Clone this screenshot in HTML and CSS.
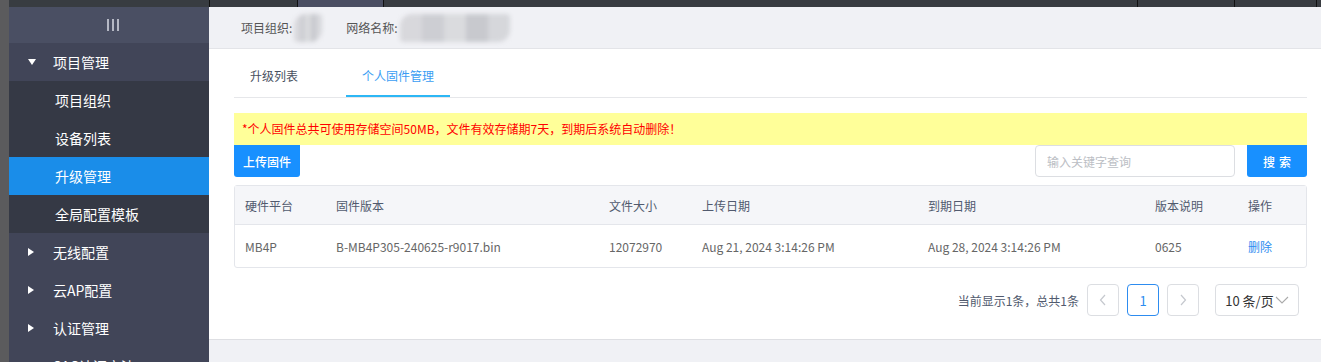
FILE: index.html
```html
<!DOCTYPE html>
<html>

<head>
    <title>个人固件管理</title>
    <meta charset="UTF-8">
    <link rel="stylesheet" href="styles.css">
</head>

<body>
    <div class="app">
        <div class="edge"></div>
        <div class="frame">
            <div class="topbar">
                <span class="seg" style="width:200px"></span>
                <span class="seg" style="width:87px"></span>
                <span class="seg seg-on" style="width:85px"></span>
                <span class="seg" style="width:753px"></span>
                <span class="seg" style="width:96px"></span>
                <span class="seg" style="width:81px"></span>
                <span class="seg"></span>
            </div>
            <div class="workspace">
                <aside class="sidebar">
                    <div class="side-head">
                        <span class="bars"><i></i><i></i><i></i></span>
                    </div>
                    <div class="menu-item open"><span class="caret down"></span>项目管理</div>
                    <div class="sub-item">项目组织</div>
                    <div class="sub-item">设备列表</div>
                    <div class="sub-item active">升级管理</div>
                    <div class="sub-item">全局配置模板</div>
                    <div class="menu-item"><span class="caret"></span>无线配置</div>
                    <div class="menu-item"><span class="caret"></span>云AP配置</div>
                    <div class="menu-item"><span class="caret"></span>认证管理</div>
                    <div class="menu-item"><span class="caret"></span>SAC认证方法</div>
                </aside>
                <main class="content">
                    <div class="crumbs">
                        <span class="crumb">项目组织:</span>
                        <span class="blur small"></span>
                        <span class="crumb">网络名称:</span>
                        <span class="blur wide"></span>
                    </div>
                    <section class="panel">
                        <nav class="tabs">
                            <a class="tab">升级列表</a>
                            <a class="tab current">个人固件管理</a>
                        </nav>
                        <div class="notice">*个人固件总共可使用存储空间50MB，文件有效存储期7天，到期后系统自动删除！</div>
                        <div class="toolbar">
                            <button class="btn">上传固件</button>
                            <div class="search">
                                <input class="search-input" type="text" placeholder="输入关键字查询">
                                <button class="btn btn-search">搜索</button>
                            </div>
                        </div>
                        <table class="grid">
                            <colgroup>
                                <col style="width:91px">
                                <col style="width:273px">
                                <col style="width:93px">
                                <col style="width:226px">
                                <col style="width:227px">
                                <col style="width:93px">
                                <col>
                            </colgroup>
                            <thead>
                                <tr>
                                    <th>硬件平台</th>
                                    <th>固件版本</th>
                                    <th>文件大小</th>
                                    <th>上传日期</th>
                                    <th>到期日期</th>
                                    <th>版本说明</th>
                                    <th>操作</th>
                                </tr>
                            </thead>
                            <tbody>
                                <tr>
                                    <td>MB4P</td>
                                    <td>B-MB4P305-240625-r9017.bin</td>
                                    <td>12072970</td>
                                    <td>Aug 21, 2024 3:14:26 PM</td>
                                    <td>Aug 28, 2024 3:14:26 PM</td>
                                    <td>0625</td>
                                    <td><a class="link">删除</a></td>
                                </tr>
                            </tbody>
                        </table>
                        <div class="pager">
                            <span class="total">当前显示1条，总共1条</span>
                            <span class="page-btn">
                                <svg width="8" height="12" viewBox="0 0 8 12"><path d="M6 1L1.5 6L6 11" fill="none" stroke="#c5c8ce" stroke-width="1.2"/></svg>
                            </span>
                            <span class="page-btn page-on">1</span>
                            <span class="page-btn">
                                <svg width="8" height="12" viewBox="0 0 8 12"><path d="M2 1L6.5 6L2 11" fill="none" stroke="#c5c8ce" stroke-width="1.2"/></svg>
                            </span>
                            <span class="page-size">10 条/页
                                <svg width="14" height="8" viewBox="0 0 14 8"><path d="M1 1L7 7L13 1" fill="none" stroke="#aaa" stroke-width="1.1"/></svg>
                            </span>
                        </div>
                    </section>
                </main>
            </div>
        </div>
    </div>
</body>

</html>
```

FILE: styles.css
```css
html, body {
    margin: 0;
    height: 100%;
    overflow: hidden;
    font-family: "Noto Sans CJK SC", "Noto Sans", sans-serif;
}
.app {
    display: flex;
    height: 100%;
}
.edge {
    width: 9px;
    flex: none;
    background: #5b5b5d;
}
.frame {
    flex: 1;
    display: flex;
    flex-direction: column;
    min-width: 0;
}
.topbar {
    height: 7px;
    display: flex;
    background: #383c41;
    flex: none;
}
.seg {
    height: 100%;
    border-right: 1px solid #111;
    flex: none;
}
.seg:last-child {
    flex: 1;
    border-right: 0;
}
.seg-on {
    background: #4a4e62;
}
.workspace {
    flex: 1;
    display: flex;
    min-height: 0;
}

/* sidebar */
.sidebar {
    width: 200px;
    flex: none;
    background: #414558;
    color: #fff;
    font-size: 14px;
}
.side-head {
    height: 36px;
    background: #4a4f63;
    display: flex;
    align-items: center;
    justify-content: center;
}
.bars {
    display: flex;
    gap: 3px;
    margin-left: 8px;
}
.bars i {
    width: 2px;
    height: 12px;
    background: #b5b8c4;
}
.menu-item, .sub-item {
    height: 38px;
    line-height: 38px;
    display: flex;
    align-items: center;
}
.menu-item {
    padding-left: 19px;
    background: #414558;
}
.sub-item {
    padding-left: 46px;
    background: #353945;
}
.sub-item.active {
    background: #1a8de9;
}
.caret {
    width: 0;
    height: 0;
    margin-right: 19px;
    border-top: 4px solid transparent;
    border-bottom: 4px solid transparent;
    border-left: 6px solid #fff;
}
.caret.down {
    margin-right: 17px;
    border-left: 4px solid transparent;
    border-right: 4px solid transparent;
    border-top: 6px solid #fff;
    border-bottom: 0;
}

/* content */
.content {
    flex: 1;
    background: #f0f1f5;
    min-width: 0;
}
.crumbs {
    height: 41px;
    display: flex;
    align-items: center;
    padding-left: 32px;
    font-size: 12px;
    color: #555;
}
.crumb {
    margin-right: 2px;
}
.blur {
    height: 28px;
    background: linear-gradient(90deg, #d8d8dc 0 20%, #cdced3 20% 40%, #dadbde 40% 60%, #c8c9ce 60% 80%, #d6d7db 80%);
    filter: blur(2px);
    border-radius: 12px 4px 12px 4px;
    margin-right: 24px;
}
.blur.small {
    width: 28px;
}
.blur.wide {
    width: 110px;
}
.panel {
    background: #fff;
    border-top: 1px solid #e3e4e8;
    border-bottom: 1px solid #dedfe3;
    padding: 8px 14px 23px 25px;
}
.tabs {
    display: flex;
    gap: 32px;
    border-bottom: 1px solid #e6e7ea;
}
.tab {
    padding: 0 16px;
    line-height: 38px;
    font-size: 12px;
    color: #495060;
    border-bottom: 2px solid transparent;
}
.tab.current {
    color: #3a9df3;
    border-bottom-color: #2db7f5;
}
.notice {
    margin-top: 15px;
    height: 32px;
    line-height: 32px;
    padding: 0 8px;
    background: #ffff99;
    color: #f00;
    font-size: 12px;
}
.toolbar {
    display: flex;
    justify-content: space-between;
}
.btn {
    height: 32px;
    padding: 0 9px;
    border: 0;
    border-radius: 0 0 3px 3px;
    background: #1890ff;
    color: #fff;
    font-family: inherit;
    font-size: 12px;
    font-weight: 500;
}
.search {
    display: flex;
    gap: 12px;
}
.search-input {
    width: 200px;
    height: 32px;
    box-sizing: border-box;
    border: 1px solid #dcdee2;
    border-radius: 4px;
    padding: 0 11px;
    font-family: inherit;
    font-size: 12px;
}
.search-input::placeholder {
    color: #bbbec4;
}
.btn-search {
    width: 60px;
    letter-spacing: 4px;
    text-indent: 4px;
}
.grid {
    margin-top: 8px;
    width: 100%;
    border-collapse: separate;
    border-spacing: 0;
    border: 1px solid #e4e6eb;
    border-radius: 3px;
    table-layout: fixed;
    font-size: 12px;
}
.grid th, .grid td {
    text-align: left;
    padding: 0 0 0 10px;
    font-weight: normal;
    white-space: nowrap;
}
.grid th {
    height: 38px;
    background: #f5f6f9;
    color: #515a6e;
    border-bottom: 1px solid #e4e6eb;
}
.grid td {
    height: 42px;
    color: #666;
}
.link {
    color: #2d8cf0;
}
.pager {
    margin-top: 16px;
    padding-right: 8px;
    display: flex;
    justify-content: flex-end;
    align-items: center;
    gap: 8px;
    font-size: 12px;
    color: #515a6e;
}
.page-btn {
    width: 32px;
    height: 32px;
    box-sizing: border-box;
    border: 1px solid #dcdee2;
    border-radius: 4px;
    display: flex;
    align-items: center;
    justify-content: center;
    color: #2d8cf0;
    font-size: 13px;
}
.page-on {
    border-color: #2d8cf0;
}
.page-size {
    margin-left: 8px;
    width: 84px;
    height: 32px;
    box-sizing: border-box;
    border: 1px solid #dcdee2;
    border-radius: 4px;
    display: flex;
    align-items: center;
    justify-content: center;
    gap: 1px;
    color: #333;
    font-size: 13px;
}
```
